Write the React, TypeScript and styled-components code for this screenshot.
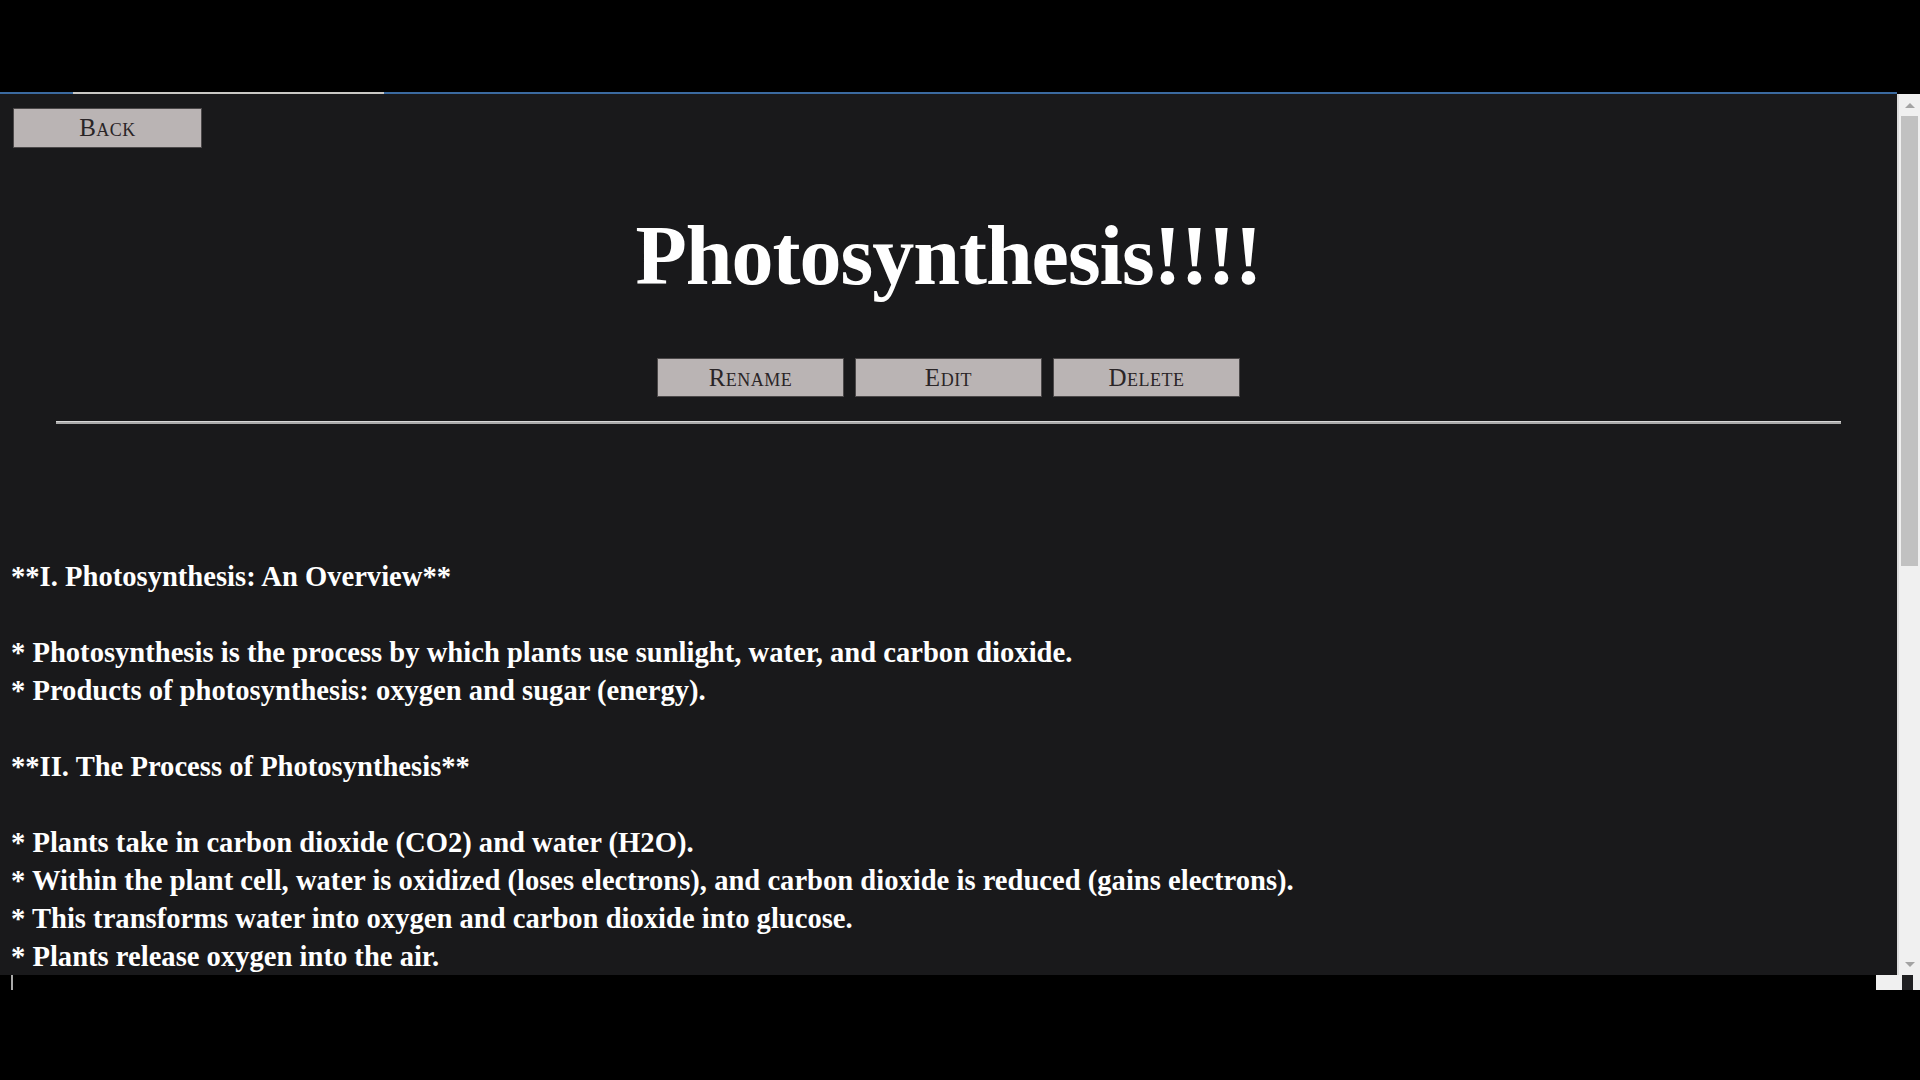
import React from 'react';
import styled, {createGlobalStyle} from "styled-components";

const GlobalStyle = createGlobalStyle`
  html, body {
    margin: 0;
    padding: 0;
    background: #000;
    overflow: hidden;
  }
`

const noteText = `**I. Photosynthesis: An Overview**

* Photosynthesis is the process by which plants use sunlight, water, and carbon dioxide.
* Products of photosynthesis: oxygen and sugar (energy).

**II. The Process of Photosynthesis**

* Plants take in carbon dioxide (CO2) and water (H2O).
* Within the plant cell, water is oxidized (loses electrons), and carbon dioxide is reduced (gains electrons).
* This transforms water into oxygen and carbon dioxide into glucose.
* Plants release oxygen into the air.`

export default function App() {
    return (
        <Screen>
            <GlobalStyle/>
            <TopBar/>
            <TabStrip>
                <TabMark/>
            </TabStrip>
            <Frame>
                <Page>
                    <TopRow>
                        <Button $width={189} $height={40}>Back</Button>
                    </TopRow>
                    <Title>Photosynthesis!!!!</Title>
                    <Actions>
                        <Button>Rename</Button>
                        <Button>Edit</Button>
                        <Button>Delete</Button>
                    </Actions>
                    <Divider/>
                    <Note>{noteText}</Note>
                </Page>
                <ScrollBar>
                    <Arrow $down={false}/>
                    <Thumb/>
                    <TrackRest/>
                    <Arrow $down={true}/>
                </ScrollBar>
            </Frame>
            <BottomBar>
                <Caret/>
                <Corner>
                    <CornerPiece/>
                </Corner>
            </BottomBar>
        </Screen>
    );
}

const Screen = styled.div`
  width: 1920px;
  height: 1080px;
  display: flex;
  flex-direction: column;
  background: #000;
`

const TopBar = styled.div`
  height: 92px;
  flex-shrink: 0;
`

const TabStrip = styled.div`
  height: 2px;
  width: 1897px;
  background: #3b6aa0;
  flex-shrink: 0;
`

const TabMark = styled.div`
  margin-left: 73px;
  width: 311px;
  height: 2px;
  background: #c9c7c4;
`

const Frame = styled.div`
  height: 881px;
  display: flex;
  flex-shrink: 0;
`

const Page = styled.div`
  flex: 1;
  background: #19191b;
  overflow: hidden;
  color: #fff;
`

const TopRow = styled.div`
  padding: 14px 0 0 13px;
  display: flex;
`

const Button = styled.button<{ $width?: number; $height?: number }>`
  width: ${p => p.$width ?? 187}px;
  height: ${p => p.$height ?? 39}px;
  background: #bab4b4;
  border: 1px solid #4b4849;
  box-sizing: border-box;
  padding: 0;
  color: #2a2527;
  font-family: "Liberation Serif", serif;
  font-size: 25px;
  font-variant: small-caps;
  letter-spacing: 0.5px;
  cursor: pointer;
`

const Title = styled.h1`
  margin: 51px 0 0;
  height: 113px;
  line-height: 113px;
  text-align: center;
  font-family: "Liberation Serif", serif;
  font-weight: 700;
  font-size: 84px;
  letter-spacing: -1px;
  color: #fff;
`

const Actions = styled.div`
  margin-top: 46px;
  display: flex;
  justify-content: center;
  gap: 11px;
`

const Divider = styled.hr`
  margin: 24px 56px 0;
  height: 0;
  border: none;
  border-top: 1px solid #d6d6d6;
  border-bottom: 2px solid #a9a9a9;
`

const Note = styled.div`
  margin-top: 134px;
  padding-left: 11px;
  white-space: pre-wrap;
  font-family: "Liberation Serif", serif;
  font-weight: 700;
  font-size: 28.6px;
  line-height: 38px;
  color: #fff;
`

const ScrollBar = styled.div`
  width: 21px;
  flex-shrink: 0;
  background: #f0f0f0;
  border-left: 2px solid #dcdcdc;
  display: flex;
  flex-direction: column;
  align-items: center;
`

const Arrow = styled.div<{ $down: boolean }>`
  height: 22px;
  width: 100%;
  display: flex;
  align-items: center;
  justify-content: center;
  flex-shrink: 0;

  &::before {
    content: "";
    border-left: 5px solid transparent;
    border-right: 5px solid transparent;
    ${p => p.$down ? "border-top: 5px solid #a3a3a3;" : "border-bottom: 5px solid #a3a3a3;"}
  }
`

const Thumb = styled.div`
  width: 17px;
  height: 450px;
  background: #c1c1c1;
  flex-shrink: 0;
`

const TrackRest = styled.div`
  flex: 1;
`

const BottomBar = styled.div`
  height: 15px;
  display: flex;
  justify-content: space-between;
`

const Caret = styled.div`
  margin-left: 11px;
  width: 2px;
  height: 15px;
  background: #a9a9a9;
`

const Corner = styled.div`
  width: 44px;
  height: 15px;
  background: #f0f0f0;
  display: flex;
  justify-content: flex-end;
  padding-right: 7px;
  box-sizing: border-box;
`

const CornerPiece = styled.div`
  width: 11px;
  height: 15px;
  background: #202022;
`
